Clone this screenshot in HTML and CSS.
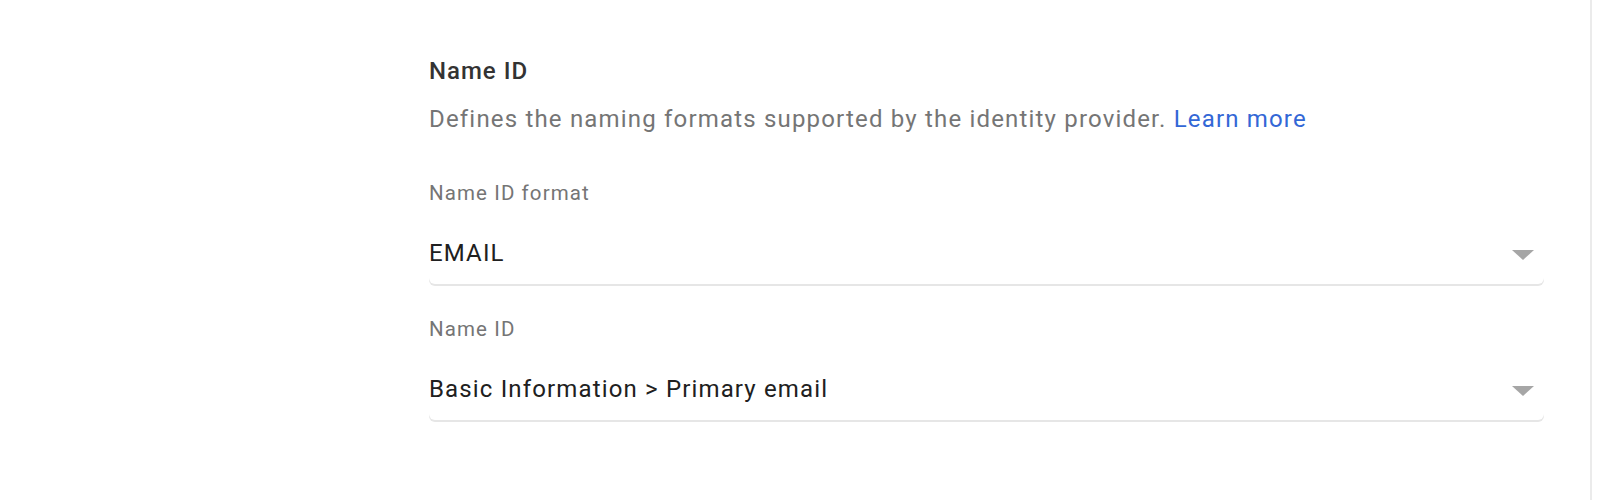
FILE: index.html
```html
<!DOCTYPE html>
<html>
<head>
<meta charset="utf-8">
<link rel="stylesheet" href="styles.css">
</head>
<body>
<div class="page">
  <section class="panel">
    <h2 class="title">Name ID</h2>
    <p class="desc">Defines the naming formats supported by the identity provider. <a class="link" href="#">Learn more</a></p>
    <div class="field">
      <div class="label">Name ID format</div>
      <div class="select">
        <span class="value">EMAIL</span>
        <span class="arrow"></span>
      </div>
    </div>
    <div class="field">
      <div class="label">Name ID</div>
      <div class="select">
        <span class="value">Basic Information &gt; Primary email</span>
        <span class="arrow"></span>
      </div>
    </div>
  </section>
</div>
</body>
</html>
```

FILE: styles.css
```css
html, body {
  margin: 0;
  padding: 0;
  background: #ffffff;
  font-family: Roboto, "Noto Sans", Arial, sans-serif;
}
.page {
  width: 1592px;
  height: 500px;
  border-right: 2px solid #ebebeb;
  box-sizing: border-box;
}
.panel {
  padding: 55px 0 0 429px;
  width: 1544px;
  box-sizing: border-box;
}
.title {
  margin: 0;
  font-size: 24px;
  font-weight: 500;
  line-height: 32px;
  letter-spacing: 1px;
  color: #333333;
}
.desc {
  margin: 16px 0 0 0;
  font-size: 24px;
  line-height: 32px;
  letter-spacing: 1.18px;
  color: #757575;
}
.link {
  color: #3367d6;
  text-decoration: none;
}
.field {
  margin-top: 44px;
}
.field + .field {
  margin-top: 31px;
}
.label {
  font-size: 20.5px;
  line-height: 28px;
  letter-spacing: 1.1px;
  color: #757575;
}
.select {
  display: flex;
  align-items: center;
  justify-content: space-between;
  height: 62px;
  margin-top: 15px;
  border-radius: 0 0 6px 6px;
  box-shadow: 0 2px 0 #e6e6e6;
}
.value {
  font-size: 24px;
  letter-spacing: 1.15px;
  color: #202020;
}
.arrow {
  width: 0;
  height: 0;
  border-left: 11px solid transparent;
  border-right: 11px solid transparent;
  border-top: 10px solid #a6a6a6;
  margin: 4px 10px 0 0;
}
```
